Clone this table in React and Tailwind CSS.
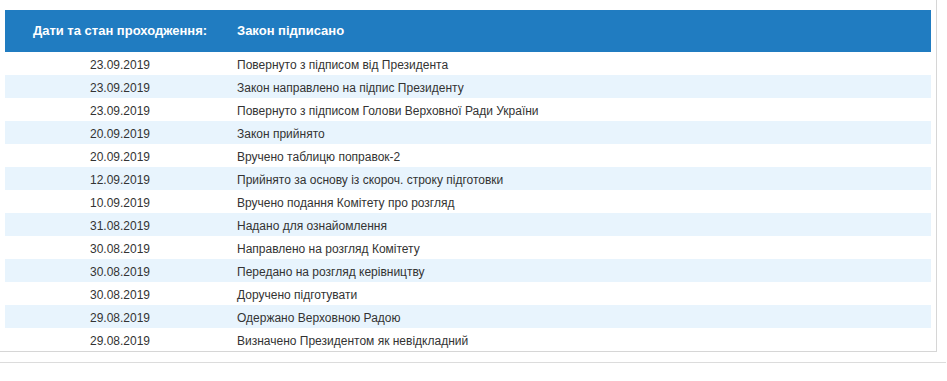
const rows = [
  ['23.09.2019', 'Повернуто з підписом від Президента'],
  ['23.09.2019', 'Закон направлено на підпис Президенту'],
  ['23.09.2019', 'Повернуто з підписом Голови Верховної Ради України'],
  ['20.09.2019', 'Закон прийнято'],
  ['20.09.2019', 'Вручено таблицю поправок-2'],
  ['12.09.2019', 'Прийнято за основу із скороч. строку підготовки'],
  ['10.09.2019', 'Вручено подання Комітету про розгляд'],
  ['31.08.2019', 'Надано для ознайомлення'],
  ['30.08.2019', 'Направлено на розгляд Комітету'],
  ['30.08.2019', 'Передано на розгляд керівництву'],
  ['30.08.2019', 'Доручено підготувати'],
  ['29.08.2019', 'Одержано Верховною Радою'],
  ['29.08.2019', 'Визначено Президентом як невідкладний'],
]

export default function App() {
  return (
    <div className="w-[947px] h-[381px] bg-white font-['Liberation_Sans',Arial,sans-serif]">
      <div className="w-[937px] border-r border-b border-[#d6d6d6] pt-[10px] pl-[5px] pr-[5px]">
        <div className="flex h-[42px] items-center bg-[#207cc1] text-[13px] font-bold text-white">
          <div className="w-[230px] text-center">Дати та стан проходження:</div>
          <div className="pl-[2px]">Закон підписано</div>
        </div>
        {rows.map(([date, text], i) => (
          <div
            key={i}
            className={`flex h-[23px] items-center pt-[3px] text-[12px] text-[#333] ${i % 2 === 1 ? 'bg-[#e8f4fd]' : 'bg-white'}`}
          >
            <div className="w-[230px] text-center">{date}</div>
            <div className="pl-[2px]">{text}</div>
          </div>
        ))}
      </div>
      <div className="mt-[10px] h-px w-[946px] bg-[#dcdcdc]" />
    </div>
  )
}
